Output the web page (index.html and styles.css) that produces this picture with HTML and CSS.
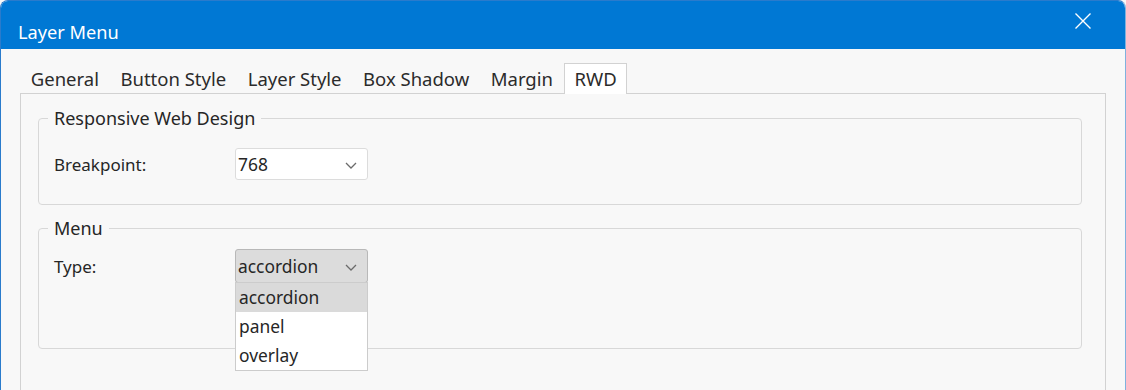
FILE: index.html
```html
<!DOCTYPE html>
<html lang="en">
<head>
    <meta charset="UTF-8">
    <meta name="viewport" content="width=device-width, initial-scale=1.0">
    <title>Layer Menu</title>
    <link rel="stylesheet" href="styles.css">
</head>
<body>
    <div class="window">
        <div class="titlebar">
            <span class="title">Layer Menu</span>
            <span class="close">
                <svg width="18" height="18" viewBox="0 0 18 18">
                    <path d="M1.5 1.5 L16.5 16.5 M16.5 1.5 L1.5 16.5" stroke="#ffffff" stroke-width="1.4" fill="none"/>
                </svg>
            </span>
        </div>

        <div class="content">
            <div class="tabs">
                <div class="tab">General</div>
                <div class="tab">Button Style</div>
                <div class="tab">Layer Style</div>
                <div class="tab">Box Shadow</div>
                <div class="tab">Margin</div>
                <div class="tab active">RWD</div>
            </div>

            <div class="panel">
                <fieldset class="group group-rwd">
                    <legend>Responsive Web Design</legend>
                    <div class="row">
                        <label>Breakpoint:</label>
                        <div class="select">
                            <span>768</span>
                            <svg class="chevron" width="12" height="7" viewBox="0 0 12 7">
                                <path d="M1 1 L6 6 L11 1" stroke="#6b6b6b" stroke-width="1.3" fill="none"/>
                            </svg>
                        </div>
                    </div>
                </fieldset>

                <fieldset class="group group-menu">
                    <legend>Menu</legend>
                    <div class="row">
                        <label>Type:</label>
                        <div class="select open">
                            <span>accordion</span>
                            <svg class="chevron" width="12" height="7" viewBox="0 0 12 7">
                                <path d="M1 1 L6 6 L11 1" stroke="#6b6b6b" stroke-width="1.3" fill="none"/>
                            </svg>
                            <ul class="options">
                                <li class="selected">accordion</li>
                                <li>panel</li>
                                <li>overlay</li>
                            </ul>
                        </div>
                    </div>
                </fieldset>
            </div>
        </div>
    </div>
</body>
</html>
```

FILE: styles.css
```css
body {
    margin: 0;
    padding: 0;
    font-family: 'Noto Sans', 'Open Sans', sans-serif;
    background-color: #f8f8f8;
    color: #262626;
}
.window {
    width: 1126px;
    height: 390px;
    box-sizing: border-box;
    border: 1px solid #2a7bcc;
    border-right-color: #7fb2de;
    border-bottom: none;
    border-radius: 8px 8px 0 0;
    overflow: hidden;
    background-color: #f8f8f8;
}
.titlebar {
    height: 48px;
    background-color: #0078d4;
    color: #ffffff;
    display: flex;
    justify-content: space-between;
    align-items: flex-start;
    padding-left: 17px;
}
.title {
    font-size: 18.2px;
    line-height: 22px;
    margin-top: 20px;
}
.close {
    width: 18px;
    height: 18px;
    margin-top: 11px;
    margin-right: 33px;
}
.content {
    padding: 14px 19px 0 19px;
}
.tabs {
    display: flex;
    position: relative;
    z-index: 1;
}
.tab {
    font-size: 18.5px;
    line-height: 29px;
    padding: 0 9.75px;
    border: 1px solid transparent;
    border-bottom: none;
    color: #2b2b2b;
}
.tab.active {
    background-color: #ffffff;
    border-color: #d2d2d2;
    margin-bottom: -1px;
    height: 31px;
    box-sizing: border-box;
}
.panel {
    border: 1px solid #d2d2d2;
    border-bottom: none;
    height: 320px;
    padding: 13px 23px 0 17px;
    display: flex;
    flex-direction: column;
    gap: 12px;
}
.group {
    margin: 0;
    border: 1px solid #d8d8d8;
    border-radius: 4px;
    padding: 0 15px;
}
.group legend {
    font-size: 18px;
    line-height: 22px;
    padding: 0 6px;
    margin-left: -6px;
}
.group-rwd {
    padding-top: 19px;
    padding-bottom: 24px;
}
.group-menu {
    padding-top: 10px;
    padding-bottom: 65px;
}
.row {
    display: grid;
    grid-template-columns: 181px 133px;
    align-items: center;
}
.row label {
    font-size: 17px;
}
.select {
    position: relative;
    height: 32px;
    box-sizing: border-box;
    border: 1px solid #dcdcdc;
    border-radius: 3px;
    background-color: #ffffff;
    display: flex;
    align-items: center;
    justify-content: space-between;
    padding: 0 10px 0 2px;
    font-size: 17.4px;
}
.select.open {
    height: 34px;
    background-color: #dcdcdc;
    border-color: #b8b8b8;
}
.chevron {
    margin-top: 2px;
}
.options {
    position: absolute;
    top: 32px;
    left: -1px;
    width: 133px;
    box-sizing: border-box;
    margin: 0;
    padding: 0;
    list-style: none;
    background-color: #ffffff;
    border: 1px solid #cccccc;
}
.options li {
    height: 29px;
    line-height: 28px;
    padding-left: 3px;
}
.options li.selected {
    background-color: #dadada;
}
```
